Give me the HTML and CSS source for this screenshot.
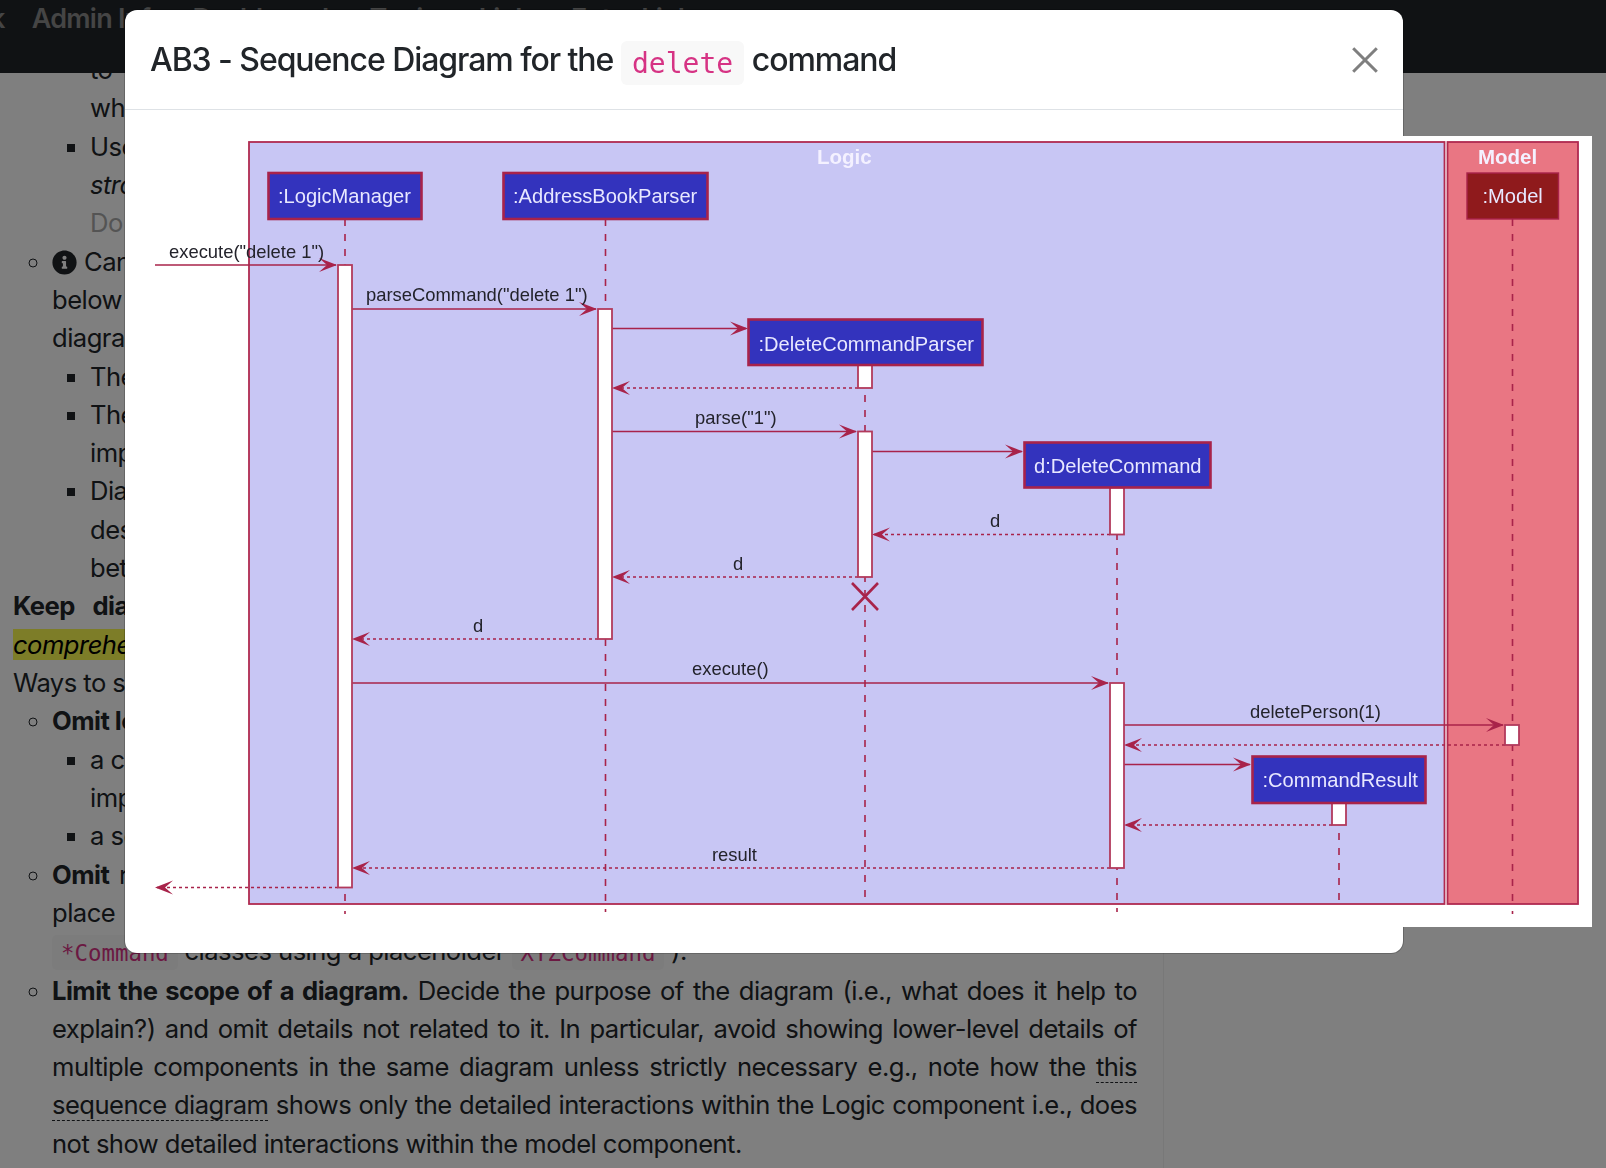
FILE: index.html
```html
<!DOCTYPE html>
<html lang="en">
<head>
<meta charset="utf-8">
<title>AB3 - Sequence Diagram</title>
<link rel="stylesheet" href="styles.css">
</head>
<body>
<nav class="topnav">
  <span class="nav-item">k</span>
  <span class="nav-item">Admin Info</span>
  <span class="nav-item">Dashboards</span>
  <span class="nav-item">Topics</span>
  <span class="nav-item">Links</span>
  <span class="nav-item">Extra Links</span>
</nav>

<main class="page">
  <div class="content">
    <ul class="l2">
      <li class="cont">
        <ul class="l3">
          <li class="cont"><span class="wider">to show how objects collaborate in a given scenario, in particular</span><br>when the behaviour being described is hard to follow from the code alone.</li>
          <li>Use the notation that is the most familiar to the readers of the document,<br><em>stronger notations can be used only when they are really needed</em> for that purpose.<br><span class="muted">Do not go into notation details that are not relevant here.</span></li>
        </ul>
      </li>
      <li>
        <svg class="info" viewBox="0 0 512 512" aria-hidden="true"><path d="M256 8C119 8 8 119.1 8 256c0 137 111 248 248 248s248-111 248-248C504 119.1 393 8 256 8zm0 110c23.2 0 42 18.8 42 42s-18.8 42-42 42-42-18.8-42-42 18.8-42 42-42zm56 254c0 6.6-5.4 12-12 12h-88c-6.6 0-12-5.4-12-12v-24c0-6.6 5.4-12 12-12h12v-64h-12c-6.6 0-12-5.4-12-12v-24c0-6.6 5.4-12 12-12h64c6.6 0 12 5.4 12 12v100h12c6.6 0 12 5.4 12 12v24z"/></svg>Can you spot the things that were left out of the sequence diagram shown<br><span class="wider">below and see how the omissions make the diagram easier to read, as this</span><br>diagram only needs to get the following points across:
        <ul class="l3">
          <li>The overall flow of the command through the components.</li>
          <li>The objects that get created and destroyed along the way, though not the<br>implementation details of how each of those objects does its work.</li>
          <li>Diagrams are not meant to be complete; they need only show what the<br>design document is trying to say, and the level of detail can vary<br>between one diagram and another in the same document.</li>
        </ul>
      </li>
    </ul>

    <p class="just"><strong>Keep diagrams simple.</strong> The aim is to make diagrams easy to take in, and so more</p>
    <p><span class="mark"><em>comprehensible</em></span></p>
    <p>Ways to simplify diagrams:</p>

    <ul class="l2">
      <li>
        <strong>Omit less important details.</strong> Examples:
        <ul class="l3">
          <li>a class diagram can omit minor utility classes, private or otherwise<br>implementation-level members, and less important associations</li>
          <li>a sequence diagram can omit less important interactions and self-calls.</li>
        </ul>
      </li>
      <li><span class="wide"><strong>Omit</strong> repetitive details. e.g., when there are many similar classes, you can</span><br><span class="wider">place one example of each kind in the diagram (e.g., show only one of the many</span><br><code class="inline">*Command</code> classes using a placeholder <code class="inline">XYZCommand</code> ).</li>
      <li class="para"><strong>Limit the scope of a diagram.</strong> Decide the purpose of the diagram (i.e., what does it help to explain?) and omit details not related to it. In particular, avoid showing lower-level details of multiple components in the same diagram unless strictly necessary e.g., note how the <span class="tip">this sequence diagram</span> shows only the detailed interactions within the Logic component i.e., does not show detailed interactions within the model component.</li>
    </ul>
  </div>
</main>

<div class="backdrop"></div>

<section class="modal" role="dialog" aria-label="Sequence Diagram">
  <header class="modal-head">
    <h5 class="modal-title">AB3 - Sequence Diagram for the <code class="title-code">delete</code> command</h5>
    <button class="close" aria-label="Close">
      <svg viewBox="0 0 26 26" aria-hidden="true"><path d="M1.2 1.2 24.8 24.8M24.8 1.2 1.2 24.8"/></svg>
    </button>
  </header>
  <div class="modal-body">
    <svg class="diagram" viewBox="151 136 1441 791" width="1441" height="791" role="img" aria-label="Sequence diagram">
      <defs>
        <path id="ar" d="M0 0-18-7-10 0-18 7Z"/>
        <path id="al" d="M0 0 18-7 10 0 18 7Z"/>
      </defs>
      <g class="soft">
        <rect class="frame logic" x="249" y="142" width="1195.500" height="762"/>
        <rect class="frame model" x="1447.500" y="142" width="130.500" height="762"/>

        <g class="life">
          <path d="M345 219V905M345 911V914"/>
          <path d="M605.500 219V912"/>
          <path d="M865 365V905"/>
          <path d="M1117 488V912"/>
          <path d="M1339 803V907"/>
          <path d="M1512.500 219V905M1512.500 911V914"/>
        </g>

        <g class="msg">
          <path d="M155 265H336"/>
          <path d="M352 309H596"/>
          <path d="M612 328.500H746"/>
          <path d="M612 431.500H856"/>
          <path d="M872 451.500H1022"/>
          <path d="M352 683H1108"/>
          <path d="M1124 725H1503"/>
          <path d="M1124 764.500H1250"/>
        </g>
        <g class="ret">
          <path d="M858 388H614"/>
          <path d="M1110 534.500H874"/>
          <path d="M858 577H614"/>
          <path d="M598 639H354"/>
          <path d="M1505 745H1126"/>
          <path d="M1332 825H1126"/>
          <path d="M1110 868H354"/>
          <path d="M338 887.500H157"/>
        </g>
        <g class="head">
          <use href="#ar" x="337" y="265"/>
          <use href="#ar" x="597" y="309"/>
          <use href="#ar" x="748" y="328.500"/>
          <use href="#ar" x="857" y="431.500"/>
          <use href="#ar" x="1023" y="451.500"/>
          <use href="#ar" x="1109" y="683"/>
          <use href="#ar" x="1504" y="725"/>
          <use href="#ar" x="1251" y="764.500"/>
          <use href="#al" x="612" y="388"/>
          <use href="#al" x="872" y="534.500"/>
          <use href="#al" x="612" y="577"/>
          <use href="#al" x="352" y="639"/>
          <use href="#al" x="1124" y="745"/>
          <use href="#al" x="1124" y="825"/>
          <use href="#al" x="352" y="868"/>
          <use href="#al" x="155" y="887.500"/>
        </g>

        <g class="bar">
          <rect x="338" y="265" width="14" height="622.500"/>
          <rect x="598" y="309" width="14" height="330"/>
          <rect x="858" y="365" width="14" height="23"/>
          <rect x="858" y="431.500" width="14" height="145.500"/>
          <rect x="1110" y="487.500" width="14" height="47"/>
          <rect x="1110" y="683" width="14" height="185"/>
          <rect x="1505" y="725" width="14" height="20"/>
          <rect x="1332" y="803" width="14" height="22"/>
        </g>

        <path class="destroy" d="M852 583 878 610M878 583 852 610"/>

        <g class="actor">
          <rect x="268.500" y="173" width="153" height="46"/>
          <rect x="503.500" y="173" width="204" height="46"/>
          <rect x="748.500" y="319.500" width="234" height="45.500"/>
          <rect x="1024.500" y="442.500" width="186" height="45"/>
          <rect x="1252.500" y="756.500" width="173" height="46.500"/>
        </g>
        <rect class="actor-model" x="1467" y="173" width="91.500" height="46"/>

        <g class="actor-text">
          <text x="278" y="203">:LogicManager</text>
          <text x="513" y="203">:AddressBookParser</text>
          <text x="758.500" y="350.500">:DeleteCommandParser</text>
          <text x="1034" y="472.500">d:DeleteCommand</text>
          <text x="1262.500" y="786.500">:CommandResult</text>
          <text x="1482.500" y="203">:Model</text>
        </g>
        <g class="group-text">
          <text x="817" y="164">Logic</text>
          <text x="1478" y="164">Model</text>
        </g>
        <g class="msg-text">
          <text x="169" y="258">execute("delete 1")</text>
          <text x="366" y="301">parseCommand("delete 1")</text>
          <text x="695" y="423.500">parse("1")</text>
          <text x="990" y="526.500">d</text>
          <text x="733" y="570">d</text>
          <text x="473" y="632">d</text>
          <text x="692" y="675">execute()</text>
          <text x="1250" y="718">deletePerson(1)</text>
          <text x="712" y="861">result</text>
        </g>
      </g>
    </svg>
  </div>
</section>
</body>
</html>
```

FILE: styles.css
```css
* { box-sizing: border-box; }

html, body {
  margin: 0;
  height: 100%;
  overflow: hidden;
  background: #fff;
}

body {
  font-family: Inter, "Liberation Sans", sans-serif;
  font-size: 25.6px;
  line-height: 38.32px;
  letter-spacing: -0.021em;
  color: #212529;
}

/* top bar */
.topnav {
  position: fixed;
  top: 0;
  left: 0;
  right: 0;
  height: 73px;
  z-index: 2;
  background: #212529;
  display: flex;
  gap: 27px;
  margin-left: -10px;
  color: #8a8a8a;
  font-size: 27px;
  font-weight: 600;
  letter-spacing: -0.027em;
  line-height: 37px;
  white-space: nowrap;
}

/* page text */
.page {
  width: 1164px;
  height: 100vh;
  border-right: 1px solid #f0f0f0;
  padding: 51px 26px 0 13px;
}

.content p { margin: 0; }

ul { margin: 0; padding: 0; }
.l2 { padding-left: 39px; list-style-type: circle; }
.l3 { padding-left: 38px; list-style-type: square; }
.cont { list-style: none; }

.just {
  text-align: justify;
  text-align-last: justify;
}

.para {
  text-align: justify;
}

.wide { word-spacing: 3px; }
.wider { word-spacing: 9px; }

.muted { color: #a8a8a8; }

.mark { background: #fafa50; color: #000; }

.info {
  width: 25px;
  height: 25px;
  fill: #212529;
  vertical-align: -4px;
  margin-right: 7px;
}

code {
  font-family: "DejaVu Sans Mono", monospace;
  letter-spacing: 0;
}

.inline {
  font-size: 22.4px;
  color: #d63384;
  background: #f8f8f8;
  padding: 4.5px 9px;
  border-radius: 5px;
}

.tip { border-bottom: 1.4px dashed #212529; }

/* modal */
.backdrop {
  position: fixed;
  inset: 0;
  z-index: 3;
  background: rgba(0, 0, 0, .5);
}

.modal {
  position: fixed;
  z-index: 4;
  top: 10px;
  left: 125px;
  width: 1278px;
  background: #fff;
  border-radius: 12px;
  box-shadow: 0 0 0 1px rgba(0, 0, 0, .2);
}

.modal-head {
  height: 100px;
  padding: 4px 25px 0 25px;
  display: flex;
  align-items: center;
  justify-content: space-between;
  border-bottom: 1.6px solid #dee2e6;
}

.modal-title {
  margin: 0;
  font-size: 32px;
  line-height: 48px;
  font-weight: 500;
  letter-spacing: -0.033em;
  color: #212529;
}

.title-code {
  font-size: 28px;
  color: #d63384;
  background: #f8f8f8;
  padding: 5.6px 11.2px;
  border-radius: 6px;
  font-weight: 400;
  vertical-align: -2px;
}

.close {
  width: 26px;
  height: 26px;
  margin-top: -4px;
  padding: 0;
  border: 0;
  background: none;
  display: block;
}

.close svg {
  display: block;
  width: 26px;
  height: 26px;
  fill: none;
  stroke: #7f7f7f;
  stroke-width: 3;
}

.modal-body { padding: 25.6px 0 26.6px 25.6px; }

/* diagram */
.diagram { display: block; background: #fff; letter-spacing: 0; }
.soft { filter: blur(.35px); }

.frame { stroke: #b02a50; stroke-width: 1.8; }
.logic { fill: #c8c6f4; }
.model { fill: #e97683; }

.life path { fill: none; stroke: #a8234a; stroke-width: 1.6; stroke-dasharray: 7 8; }
.msg path { fill: none; stroke: #a8234a; stroke-width: 1.7; }
.ret path { fill: none; stroke: #a8234a; stroke-width: 1.5; stroke-dasharray: 3 3; }
.head use { fill: #a8234a; }
.bar rect { fill: #fff; stroke: #b23a5c; stroke-width: 1.8; }
.destroy { fill: none; stroke: #a8234a; stroke-width: 2.6; }

.actor rect { fill: #3333bd; stroke: #a8234a; stroke-width: 2.6; }
.actor-model { fill: #8f1a1c; stroke: #a8234a; stroke-width: 1.4; }

.actor-text text,
.group-text text,
.msg-text text { font-family: "Liberation Sans", Arial, sans-serif; }

.actor-text text { font-size: 20.1px; fill: #e8e8ff; }
.group-text text { font-size: 20.5px; font-weight: 700; fill: #f4f1ff; }
.msg-text text { font-size: 18.4px; fill: #23232b; }
```
